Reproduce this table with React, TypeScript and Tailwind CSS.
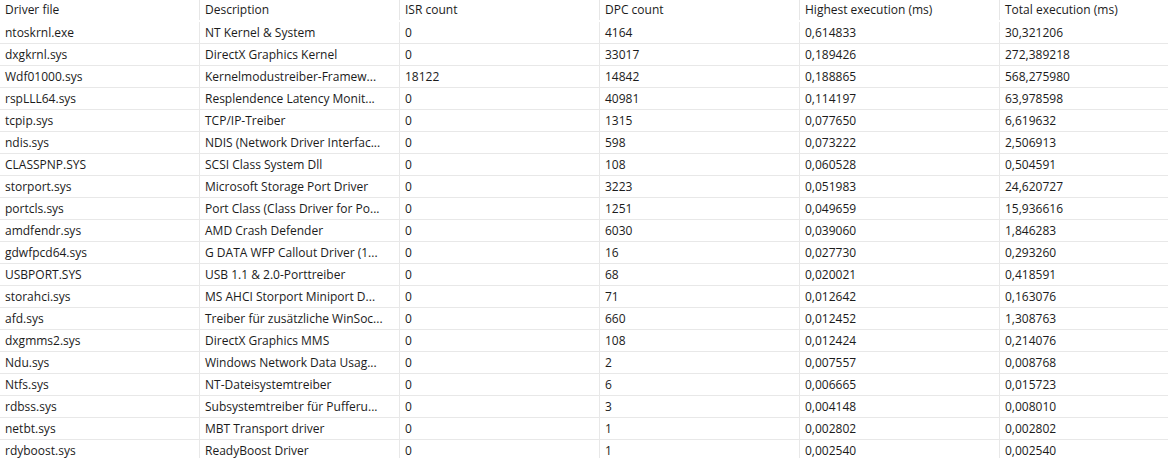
const columns = [
  "Driver file",
  "Description",
  "ISR count",
  "DPC count",
  "Highest execution (ms)",
  "Total execution (ms)",
]

const rows: string[][] = [
  ["ntoskrnl.exe", "NT Kernel & System", "0", "4164", "0,614833", "30,321206"],
  ["dxgkrnl.sys", "DirectX Graphics Kernel", "0", "33017", "0,189426", "272,389218"],
  ["Wdf01000.sys", "Kernelmodustreiber-Framew...", "18122", "14842", "0,188865", "568,275980"],
  ["rspLLL64.sys", "Resplendence Latency Monit...", "0", "40981", "0,114197", "63,978598"],
  ["tcpip.sys", "TCP/IP-Treiber", "0", "1315", "0,077650", "6,619632"],
  ["ndis.sys", "NDIS (Network Driver Interfac...", "0", "598", "0,073222", "2,506913"],
  ["CLASSPNP.SYS", "SCSI Class System Dll", "0", "108", "0,060528", "0,504591"],
  ["storport.sys", "Microsoft Storage Port Driver", "0", "3223", "0,051983", "24,620727"],
  ["portcls.sys", "Port Class (Class Driver for Po...", "0", "1251", "0,049659", "15,936616"],
  ["amdfendr.sys", "AMD Crash Defender", "0", "6030", "0,039060", "1,846283"],
  ["gdwfpcd64.sys", "G DATA WFP Callout Driver (1...", "0", "16", "0,027730", "0,293260"],
  ["USBPORT.SYS", "USB 1.1 & 2.0-Porttreiber", "0", "68", "0,020021", "0,418591"],
  ["storahci.sys", "MS AHCI Storport Miniport D...", "0", "71", "0,012642", "0,163076"],
  ["afd.sys", "Treiber für zusätzliche WinSoc...", "0", "660", "0,012452", "1,308763"],
  ["dxgmms2.sys", "DirectX Graphics MMS", "0", "108", "0,012424", "0,214076"],
  ["Ndu.sys", "Windows Network Data Usag...", "0", "2", "0,007557", "0,008768"],
  ["Ntfs.sys", "NT-Dateisystemtreiber", "0", "6", "0,006665", "0,015723"],
  ["rdbss.sys", "Subsystemtreiber für Pufferu...", "0", "3", "0,004148", "0,008010"],
  ["netbt.sys", "MBT Transport driver", "0", "1", "0,002802", "0,002802"],
  ["rdyboost.sys", "ReadyBoost Driver", "0", "1", "0,002540", "0,002540"],
]

export default function App() {
  return (
    <div className="w-[1169px] h-[458px] overflow-hidden bg-white text-[12px] text-[#1b1b1b] font-['Open_Sans',sans-serif]">
      {/* Header */}
      <div className="flex h-[22px]">
        {columns.map((c, i) => (
          <div
            key={c}
            className={
              i < columns.length - 1
                ? "w-[200px] shrink-0 flex items-start pt-[1px] pl-[5px] pr-[2px] border-r border-[#e6e6e6] h-[20px]"
                : "flex-1 flex items-start pt-[1px] pl-[5px] h-[20px]"
            }
          >
            {c}
          </div>
        ))}
      </div>

      {/* Rows */}
      {rows.map((r) => (
        <div key={r[0]} className="flex h-[22px] border-b border-[#e8e8e8] mr-[1px]">
          {r.map((cell, i) => (
            <div
              key={i}
              className={
                i < r.length - 1
                  ? "w-[200px] shrink-0 flex items-center pl-[5px] border-r border-[#e8e8e8] whitespace-nowrap overflow-hidden"
                  : "flex-1 flex items-center pl-[5px] whitespace-nowrap"
              }
            >
              {cell}
            </div>
          ))}
        </div>
      ))}
    </div>
  )
}
